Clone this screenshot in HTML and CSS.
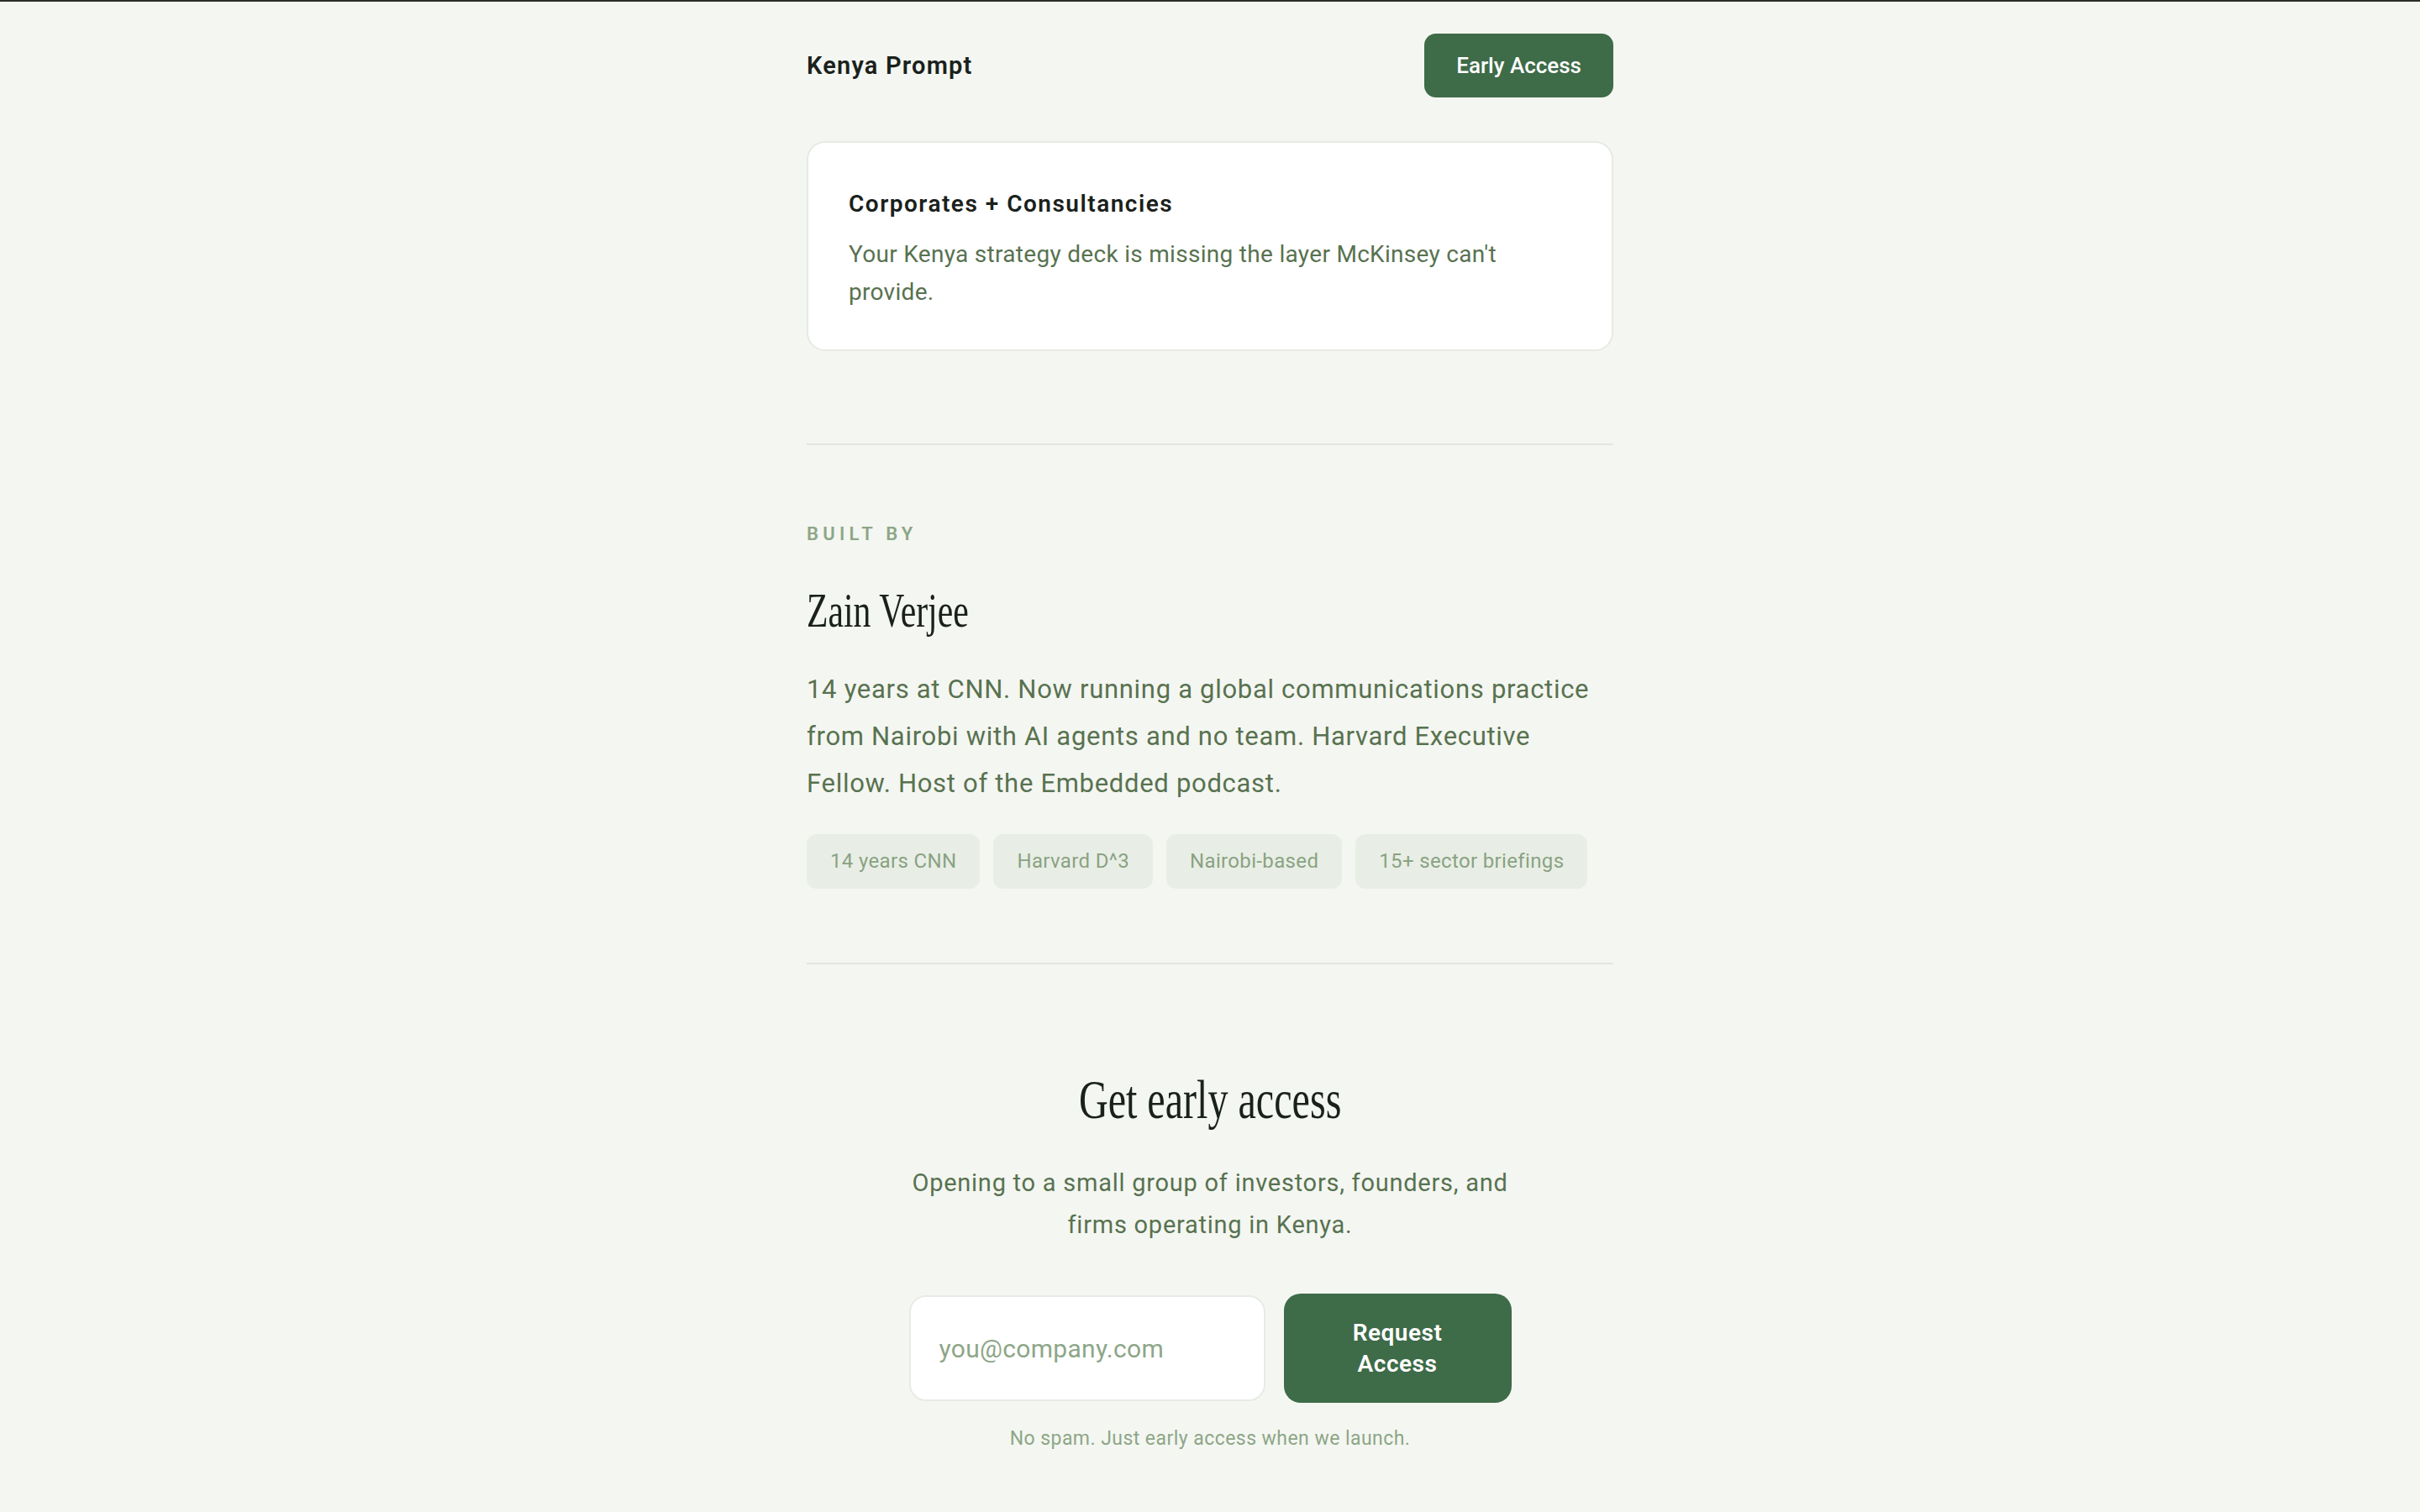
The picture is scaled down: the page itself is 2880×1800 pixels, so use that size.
FILE: index.html
```html
<!DOCTYPE html>
<html lang="en">
<head>
<meta charset="utf-8">
<title>Kenya Prompt</title>
<link rel="stylesheet" href="styles.css">
</head>
<body>
<header class="topbar">
  <div class="topbar-inner">
    <a class="brand" href="#">Kenya Prompt</a>
    <a class="btn btn-sm" href="#">Early Access</a>
  </div>
</header>
<main class="page">
  <article class="card">
    <h3 class="card-title">Corporates + Consultancies</h3>
    <p class="card-text">Your Kenya strategy deck is missing the layer McKinsey can't provide.</p>
  </article>

  <hr class="rule rule-top">

  <section class="about">
    <p class="eyebrow">Built by</p>
    <h2 class="serif name"><span class="squeeze">Zain Verjee</span></h2>
    <p class="bio">14 years at CNN. Now running a global communications practice from Nairobi with AI agents and no team. Harvard Executive Fellow. Host of the Embedded podcast.</p>
    <ul class="chips">
      <li class="chip">14 years CNN</li>
      <li class="chip">Harvard D^3</li>
      <li class="chip">Nairobi-based</li>
      <li class="chip">15+ sector briefings</li>
    </ul>
  </section>

  <hr class="rule">

  <section class="cta">
    <h2 class="serif cta-title"><span class="squeeze">Get early access</span></h2>
    <p class="cta-text">Opening to a small group of investors, founders, and firms operating in Kenya.</p>
    <form class="signup" onsubmit="return false">
      <input class="email" type="email" placeholder="you@company.com">
      <button class="btn btn-lg" type="submit">Request Access</button>
    </form>
    <p class="note">No spam. Just early access when we launch.</p>
  </section>
</main>
</body>
</html>
```

FILE: styles.css
```css
* { box-sizing: border-box; }

html, body {
  margin: 0;
  padding: 0;
}

body {
  background: #f4f6f1;
  border-top: 2px solid #2a2c29;
  font-family: Roboto, "Liberation Sans", Arial, sans-serif;
  color: #1a211b;
  min-height: 1800px;
}

a { text-decoration: none; color: inherit; }

/* Header */
.topbar {
  padding: 38px 0 40px;
}

.topbar-inner {
  width: 960px;
  margin: 0 auto;
  display: flex;
  align-items: center;
  justify-content: space-between;
}

.brand {
  font-size: 29px;
  font-weight: 600;
  letter-spacing: 1.2px;
  color: #1a211b;
}

.btn {
  display: inline-flex;
  align-items: center;
  justify-content: center;
  background: #3e6b48;
  color: #ffffff;
  font-family: inherit;
  font-weight: 500;
  border: none;
  cursor: pointer;
}

.btn-sm {
  height: 76px;
  padding: 0 38px;
  border-radius: 14px;
  font-size: 26px;
}

/* Page */
.page {
  width: 960px;
  margin: 0 auto;
  padding-top: 12px;
}

.card {
  background: #ffffff;
  border: 2px solid #e7eae4;
  border-radius: 22px;
  padding: 55px 48px 46px;
}

.card-title {
  margin: 0;
  font-size: 28px;
  line-height: 36px;
  font-weight: 600;
  letter-spacing: 1.5px;
  color: #1a211b;
}

.card-text {
  margin: 19px 0 0;
  font-size: 28px;
  line-height: 45px;
  letter-spacing: 0.3px;
  color: #587250;
}

.rule {
  border: none;
  height: 2px;
  background: #e2e6df;
  margin: 0;
}

.rule-top { margin-top: 110px; }

/* About */
.about {
  padding-top: 93px;
  padding-bottom: 88px;
}

.eyebrow {
  margin: 0;
  font-size: 22px;
  line-height: 26px;
  font-weight: 600;
  letter-spacing: 0.24em;
  text-transform: uppercase;
  color: #8da687;
}

.serif {
  font-family: "Liberation Serif", "Times New Roman", serif;
  font-weight: 400;
  color: #1a211b;
  margin: 0;
}

.squeeze {
  display: inline-block;
  transform: scaleX(0.745);
  transform-origin: left center;
}

.name {
  margin-top: 47px;
  font-size: 56px;
  line-height: 62px;
}

.bio {
  margin: 35px 0 0;
  font-size: 31px;
  line-height: 56px;
  letter-spacing: 0.7px;
  color: #587250;
}

.chips {
  list-style: none;
  margin: 32px 0 0;
  padding: 0;
  display: flex;
  gap: 16px;
}

.chip {
  background: #e8eee5;
  color: #8aa283;
  font-size: 24px;
  line-height: 34px;
  letter-spacing: 0.35px;
  padding: 15px 28px 16px;
  border-radius: 12px;
}

/* CTA */
.cta {
  padding-top: 125px;
  text-align: center;
}

.cta-title {
  font-size: 65px;
  line-height: 72px;
}

.cta-title .squeeze {
  transform: scaleX(0.74);
  transform-origin: center center;
}

.cta-text {
  max-width: 740px;
  margin: 38px auto 0;
  font-size: 29px;
  line-height: 50px;
  letter-spacing: 0.75px;
  color: #587250;
}

.signup {
  margin-top: 57px;
  display: flex;
  justify-content: center;
  align-items: center;
  gap: 22px;
}

.email {
  width: 424px;
  height: 126px;
  padding: 0 34px;
  border: 2px solid #e8ebe5;
  border-radius: 20px;
  background: #ffffff;
  font-family: inherit;
  font-size: 30px;
  letter-spacing: 0.3px;
  color: #1a211b;
  outline: none;
}

.email::placeholder { color: #8da687; }

.btn-lg {
  width: 271px;
  height: 130px;
  padding: 0 36px;
  border-radius: 20px;
  font-size: 28px;
  line-height: 37px;
  font-weight: 600;
  letter-spacing: 0.5px;
}

.note {
  margin: 27px 0 0;
  font-size: 23px;
  line-height: 32px;
  letter-spacing: 0.45px;
  color: #8da687;
}
```
